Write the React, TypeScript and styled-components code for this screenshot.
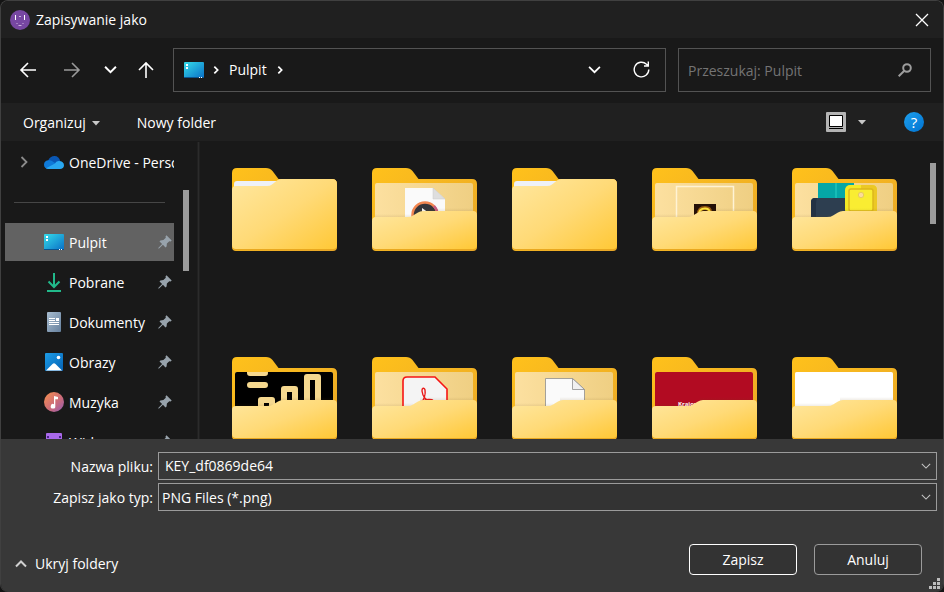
import React, { useId } from 'react';
import styled, { createGlobalStyle } from 'styled-components';

const GlobalStyle = createGlobalStyle`
  * { box-sizing: border-box; }
  body { margin: 0; background: #141414; }
  button, input, select { font: inherit; color: inherit; }
  svg { display: block; flex: none; }
`;

const Dialog = styled.div`
  position: relative;
  display: flex;
  flex-direction: column;
  height: 100vh;
  overflow: hidden;
  border: 1px solid #404040;
  border-width: 1px 1px 0;
  border-radius: 8px;
  background: #191919;
  color: #fff;
  font: 14px/20px 'Open Sans', 'Noto Sans', sans-serif;
`;

const TitleBar = styled.header`
  display: flex;
  align-items: center;
  gap: 6px;
  height: 37px;
  padding: 0 14px 0 9px;
  background: #202020;
`;

const Title = styled.h1`
  flex: 1;
  margin: 0;
  font-size: 14px;
  font-weight: 400;
`;

const IconButton = styled.button`
  display: flex;
  align-items: center;
  justify-content: center;
  padding: 0;
  border: 0;
  background: none;
`;

const NavBar = styled.div`
  display: flex;
  align-items: center;
  gap: 12px;
  height: 65px;
  padding: 0 12px 2px 5px;
`;

const Arrows = styled.div`
  display: grid;
  grid-template-columns: 44px 44px 32px 40px;
  margin-right: -5px;
`;

const Box = styled.div`
  display: flex;
  align-items: center;
  height: 44px;
  border: 1px solid #535353;
`;

const AddressBar = styled(Box)`
  flex: 1;
  gap: 8px;
  padding: 0 15px 0 10px;
`;

const Crumb = styled.a`
  padding: 0 1px;
  color: #fff;
  text-decoration: none;
`;

const AddressTools = styled.div`
  display: flex;
  gap: 32px;
  margin-left: auto;
`;

const SearchBox = styled(Box)`
  width: 253px;
  padding: 0 18px 0 9px;
`;

const SearchInput = styled.input`
  flex: 1;
  min-width: 0;
  padding: 2px 0 0;
  border: 0;
  outline: 0;
  background: none;
  &::placeholder { color: #747474; opacity: 1; }
`;

const Toolbar = styled.div`
  display: flex;
  align-items: center;
  height: 38px;
  padding: 0 19px 0 22px;
  background: #202020;
`;

const MenuButton = styled.button`
  display: flex;
  align-items: center;
  gap: 6px;
  margin-right: 37px;
  padding: 2px 0 0;
  border: 0;
  background: none;
`;

const ToolbarEnd = styled.div`
  display: flex;
  align-items: center;
  gap: 12px;
  margin-left: auto;
`;

const HelpButton = styled.button`
  width: 20px;
  height: 20px;
  margin-left: 26px;
  padding: 0;
  border: 0;
  border-radius: 50%;
  background: linear-gradient(135deg, #1ea0ee, #0072d0);
  font-size: 15px;
  line-height: 20px;
`;

const Body = styled.div`
  display: flex;
  flex: 1;
  min-height: 0;
  padding-right: 7px;
`;

const Sidebar = styled.nav`
  width: 174px;
  overflow: hidden;
  padding-left: 3px;
`;

const Places = styled.ul`
  margin: 0;
  padding: 1px 0 0;
  list-style: none;
`;

const Place = styled.a<{ $selected?: boolean }>`
  display: grid;
  grid-template-columns: 30px 20px 1fr auto;
  align-items: center;
  column-gap: 5px;
  height: 40px;
  padding: 0 2px 0 4px;
  border: 1px solid #191919;
  overflow: hidden;
  color: #fff;
  white-space: nowrap;
  text-decoration: none;
  background: ${p => (p.$selected ? '#626262' : 'none')};
  svg { justify-self: center; }
`;

const PlaceName = styled.span`
  padding-top: 2px;
`;

const Separator = styled.li`
  display: flex;
  align-items: center;
  height: 40px;
  padding: 0 10px;
  &::before { content: ''; flex: 1; height: 1px; background: #464646; }
`;

const Track = styled.div<{ $offset: number }>`
  width: 14px;
  padding: ${p => p.$offset}px 0 0 8px;
`;

const Thumb = styled.div<{ $length: number }>`
  width: 6px;
  height: ${p => p.$length}px;
  background: #9b9b9b;
`;

const Splitter = styled.div`
  width: 3px;
  margin: 1px 0 0 8px;
  border: solid #202020;
  border-width: 0 1px;
  background: #2b2b2b;
`;

const Files = styled.main`
  display: grid;
  flex: 1;
  grid-template-columns: repeat(auto-fill, 106px);
  align-content: start;
  gap: 105px 34px;
  padding: 27px 0 0 32px;
  overflow: hidden;
`;

const FolderButton = styled.button`
  padding: 0;
  border: 0;
  background: none;
`;

const Footer = styled.footer`
  padding: 13px 6px 17px 12px;
  background: #383838;
`;

const Fields = styled.div`
  display: grid;
  grid-template-columns: 140px 1fr;
  align-items: center;
  gap: 3px 5px;
`;

const Label = styled.label`
  padding-top: 2px;
  text-align: right;
`;

const Field = styled.div<{ $dark?: boolean }>`
  display: flex;
  align-items: center;
  height: 28px;
  padding-right: 5px;
  border: 1px solid #9b9b9b;
  background: ${p => (p.$dark ? '#333' : '#383838')};
`;

const NameInput = styled.input`
  flex: 1;
  min-width: 0;
  padding: 0 6px;
  border: 0;
  outline: 0;
  background: none;
`;

const TypeSelect = styled.select`
  flex: 1;
  min-width: 0;
  padding: 2px 3px 0;
  border: 0;
  outline: 0;
  appearance: none;
  background: none;
`;

const Actions = styled.div`
  display: flex;
  align-items: center;
  gap: 17px;
  margin-top: 33px;
  padding-right: 15px;
`;

const FoldersToggle = styled.button`
  display: flex;
  align-items: center;
  gap: 8px;
  margin: 8px auto 0 2px;
  padding: 0;
  border: 0;
  background: none;
`;

const ActionButton = styled.button<{ $primary?: boolean }>`
  width: 108px;
  height: 31px;
  padding: 0;
  border: 1px solid ${p => (p.$primary ? '#fff' : '#9b9b9b')};
  border-radius: 4px;
  background: #333;
`;

const Grip = styled.svg`
  position: absolute;
  right: 3px;
  bottom: 3px;
`;

type ChevronProps = { dir: 'down' | 'up' | 'right'; size?: number; color?: string; width?: number };

function Chevron({ dir, size = 12, color = '#fff', width = 2 }: ChevronProps) {
  const d = { down: 'M1 3.5 6 8.5 11 3.5', up: 'M1 8.5 6 3.5 11 8.5', right: 'M3.5 1 8.5 6 3.5 11' }[dir];
  return (
    <svg width={size} height={size} viewBox="0 0 12 12" fill="none" stroke={color} strokeWidth={width}>
      <path d={d} />
    </svg>
  );
}

function Caret() {
  return <svg width="8" height="5" viewBox="0 0 8 5"><path d="M0 0h8L4 4.5z" fill="#c8c8c8" /></svg>;
}

function Arrow({ dir, color = '#fff' }: { dir: 'left' | 'right' | 'up'; color?: string }) {
  const d = {
    left: 'M17 9H2M9 2 2 9l7 7',
    right: 'M1 9h15M9 2l7 7-7 7',
    up: 'M9 17V2M2 9l7-7 7 7',
  }[dir];
  return (
    <svg width="18" height="18" viewBox="0 0 18 18" fill="none" stroke={color} strokeWidth="1.6">
      <path d={d} />
    </svg>
  );
}

function DesktopIcon() {
  const id = useId();
  return (
    <svg width="20" height="16" viewBox="0 0 20 16">
      <defs>
        <linearGradient id={id} x1="0" y1="0" x2="1" y2="1">
          <stop offset="0" stopColor="#35dcea" /><stop offset="1" stopColor="#0a6fc6" />
        </linearGradient>
      </defs>
      <rect width="20" height="16" rx="1" fill={`url(#${id})`} />
      <path d="M0 15.500h20" stroke="#0b548f" strokeWidth="1" />
      <path d="M2 2h2v2H2zM2 5h2v2H2zM15 15h1v1h-1zM17 15h1v1h-1z" fill="#fff" />
    </svg>
  );
}

function CloudIcon() {
  return (
    <svg width="20" height="13" viewBox="0 0 20 13">
      <path d="M4 5C5 1.500 8 0 10.500 0 13.500 0 15.500 2 16.200 5l-4 4z" fill="#0a57b4" />
      <path d="M4.500 13C1.800 13 0 11 0 8.700 0 6 2 4.300 4.600 4.300c1.500 0 2.600.3 3.700 1l6 3.700z" fill="#0f7ad8" />
      <path d="M2 12.300 11 7.400C12.300 5.500 13.500 4.800 15 4.900c3 0 5 1.800 5 4.300S18.200 13 16 13H5q-2 0-3-.7z" fill="#29a7f0" />
    </svg>
  );
}

function DownloadIcon() {
  return (
    <svg width="14" height="20" viewBox="0 0 14 20" fill="none" stroke="#21b98a" strokeWidth="2">
      <path d="M7 1v14M1.500 9.500 7 15l5.500-5.500M0 19h14" />
    </svg>
  );
}

function DocumentIcon() {
  const id = useId();
  return (
    <svg width="14" height="20" viewBox="0 0 14 20">
      <defs>
        <linearGradient id={id} x1="0" y1="0" x2="1" y2="1">
          <stop offset="0" stopColor="#a9bdd0" /><stop offset="1" stopColor="#65809d" />
        </linearGradient>
      </defs>
      <rect width="14" height="20" rx="1" fill={`url(#${id})`} />
      <path d="M2 6.500h6M2 8.500h6M2 10.500h10M2 12.500h10" stroke="#fff" />
      <path d="M9 6h3v3H9z" fill="#fff" />
    </svg>
  );
}

function PictureIcon() {
  const id = useId();
  return (
    <svg width="18" height="18" viewBox="0 0 18 18">
      <defs>
        <linearGradient id={id} x1="0" y1="0" x2="1" y2="1">
          <stop offset="0" stopColor="#1d9ce6" /><stop offset="1" stopColor="#0562b5" />
        </linearGradient>
      </defs>
      <rect width="18" height="18" rx="1" fill={`url(#${id})`} />
      <path d="M1 17.500 7.500 11q1.500-1.500 3 0L17 17.500z" fill="#fff" />
      <circle cx="13.500" cy="4.500" r="1.800" fill="#fff" />
    </svg>
  );
}

function MusicIcon() {
  const id = useId();
  return (
    <svg width="20" height="20" viewBox="0 0 20 20">
      <defs>
        <linearGradient id={id} x1="0" y1="0" x2="1" y2="1">
          <stop offset="0.100" stopColor="#f08a55" /><stop offset="0.600" stopColor="#c96a7c" /><stop offset="1" stopColor="#8f5bb8" />
        </linearGradient>
      </defs>
      <circle cx="10" cy="10" r="10" fill={`url(#${id})`} />
      <path d="M10 4v8.200A2.300 2.300 0 1 0 11.300 14V7.300H14V5z" fill="#fff" />
    </svg>
  );
}

function VideoIcon() {
  return (
    <svg width="16" height="18" viewBox="0 0 16 18">
      <rect width="16" height="18" rx="1" fill="#a969ea" />
      <path d="M1 3h2v2H1zM13 3h2v2h-2zM1 9h2v2H1zM13 9h2v2h-2z" fill="#4a2488" />
      <path d="M5 6l7 4-7 4z" fill="#fff" />
    </svg>
  );
}

function PinIcon() {
  return (
    <svg width="14" height="14" viewBox="0 0 14 14">
      <path d="M8.500.3 13.700 5.500 12.600 6.500 11.300 6.200 8.900 8.600 8.600 11.600 7.500 12.400 4.900 9.800 1 13.400.2 13.600.5 12.800 4.100 9 1.500 6.500 2.400 5.400 5.400 5.100 7.800 2.700 7.500 1.400z" fill="#98a3ac" />
    </svg>
  );
}

type FolderArt = 'empty' | 'media' | 'game' | 'blocks' | 'chart' | 'pdf' | 'page' | 'red' | 'white';

function FolderContent({ art }: { art: FolderArt }) {
  switch (art) {
    case 'media':
      return (
        <g>
          <path d="M33 20h28l12 11v22H33z" fill="#fafafa" />
          <path d="M61 20v11h12z" fill="#dedede" stroke="#c8c8c8" strokeWidth=".5" />
          <circle cx="53" cy="47" r="12.500" fill="#35353a" stroke="#f28650" strokeWidth="2.500" />
          <path d="M62 38a12.500 12.500 0 0 1 3.500 8" fill="none" stroke="#c65c82" strokeWidth="2.500" />
          <path d="M50 40l7 5-7 4z" fill="#fff" />
        </g>
      );
    case 'game':
      return (
        <g>
          <path d="M24.500 54V18.500h57V54" fill="none" stroke="#fff3d4" strokeWidth="1.500" />
          <path d="M42 36h22v16H42z" fill="#251006" />
          <path d="M47 46q0-6 6-6 5 0 5 4" fill="none" stroke="#9b5a10" strokeWidth="4" />
          <path d="M47 46q0-5.500 6-5.500 4 0 5 3.500" fill="none" stroke="#ffe63c" strokeWidth="2" />
        </g>
      );
    case 'blocks':
      return (
        <g>
          <path d="M26 15h36v20H26z" fill="#05a7a7" />
          <path d="M44 15v18" stroke="#16bcb6" strokeWidth="2" />
          <path d="M19 54V34q0-4 4-4h36v24z" fill="#2d3e50" />
          <path d="M19 54V34q0-4 4-4h2q-1 3-1 6v18z" fill="#233244" />
          <rect x="53" y="17" width="32" height="30" rx="5" fill="#f5ea24" />
          <path d="M69 17h11q5 0 5 5v25H69z" fill="#ecc824" />
          <rect x="57" y="21" width="24" height="22" rx="2" fill="#f9ed32" stroke="#ddb71c" strokeWidth="1.500" />
          <circle cx="69" cy="27" r="2.700" fill="#fbdc9a" stroke="#e6cc5e" />
        </g>
      );
    case 'chart':
      return (
        <g>
          <path d="M3 15h98v40H3z" fill="#000" />
          <path d="M18 16h15M18 28h15" stroke="#f5d88f" strokeWidth="6" strokeLinecap="round" />
          <path d="M29 54V43h11v11M52 54V32h11v22M75 54V20h11v34" fill="none" stroke="#f5d88f" strokeWidth="6" strokeLinejoin="round" />
        </g>
      );
    case 'pdf':
      return (
        <g>
          <path d="M31 54V24q0-4 4-4h28l12 12v22z" fill="#f4f4f4" stroke="#f51414" strokeWidth="1.600" />
          <path d="M48 48c3-4 6-10 5-15-.7-3-3.300-2-3 1 .5 5 4 10 9 11 4 0 3-3-3-2.500-5 .5-9 3.500-11 6" fill="none" stroke="#ea1919" strokeWidth="1.400" />
        </g>
      );
    case 'page':
      return (
        <g stroke="#8e8e8e" strokeWidth=".8">
          <path d="M33.500 21.500h27l12 11V54h-39z" fill="#fafafa" />
          <path d="M60.500 21.500v11h12z" fill="#f0f0f0" />
        </g>
      );
    case 'red':
      return (
        <g>
          <path d="M3 15h98v40H3z" fill="#b20b22" />
          <text x="26" y="49" fontFamily="Open Sans, sans-serif" fontSize="6" fontWeight="700" fill="#fff">Krajowa</text>
        </g>
      );
    case 'white':
      return <path d="M3 15h98v40H3z" fill="#fff" />;
    default:
      return null;
  }
}

function Folder({ art }: { art: FolderArt }) {
  const id = useId();
  const closed = art === 'empty';
  const flap = closed
    ? 'M0 23q0-4 4-4h31q3 0 5-1.500l5-4q1.500-1.500 4-1.500h51q5 0 5 5v61q0 4-4 4H4q-4 0-4-4z'
    : 'M0 54q0-4 4-4h31q4 0 6-1.500l5-3q2-1.500 5-1.500h50q4 0 4 4v30q0 4-4 4H4q-4 0-4-4z';
  return (
    <svg width="106" height="84" viewBox="0 0 106 84">
      <defs>
        <linearGradient id={`${id}b`} x1="0" y1="0" x2="1" y2="1">
          <stop offset="0" stopColor="#ffc11b" /><stop offset="1" stopColor="#e8a628" />
        </linearGradient>
        <linearGradient id={`${id}f`} x1="0" y1="0" x2="1" y2="1">
          <stop offset="0" stopColor="#ffe79f" /><stop offset="0.500" stopColor="#ffda77" /><stop offset="1" stopColor="#ffc836" />
        </linearGradient>
        <linearGradient id={`${id}p`} x1="0" y1="0" x2="1" y2="0">
          <stop offset="0" stopColor="#fce0a0" /><stop offset="1" stopColor="#efcf83" />
        </linearGradient>
        <linearGradient id={`${id}s`} x1="0" y1="0" x2="0" y2="1">
          <stop offset="0" stopColor="#6b4a10" stopOpacity="0" /><stop offset="1" stopColor="#6b4a10" stopOpacity="0.200" />
        </linearGradient>
        <clipPath id={`${id}c`}><rect x="3" y="15" width="98" height="45" rx="2" /></clipPath>
      </defs>
      <path d="M0 5q0-5 5-5h29q4 0 6.500 3l6 8H100q5 0 5 5v63q0 4-4 4H4q-4 0-4-4z" fill={`url(#${id}b)`} />
      {closed ? (
        <path d="M2 21v-5q0-3 3-3h43l-6 6z" fill="#eef1f7" />
      ) : (
        <g clipPath={`url(#${id}c)`}>
          <path d="M3 15h98v45H3z" fill={`url(#${id}p)`} />
          <FolderContent art={art} />
          <path d="M3 46h38v6H3z" fill={`url(#${id}s)`} />
          <path d="M48 40h53v6H48z" fill={`url(#${id}s)`} />
        </g>
      )}
      <path d={flap} fill="#e9a820" />
      <path d={flap} fill={`url(#${id}f)`} transform="translate(0 -1)" />
    </svg>
  );
}

const places = [
  { name: 'Pulpit', icon: <DesktopIcon />, selected: true },
  { name: 'Pobrane', icon: <DownloadIcon /> },
  { name: 'Dokumenty', icon: <DocumentIcon /> },
  { name: 'Obrazy', icon: <PictureIcon /> },
  { name: 'Muzyka', icon: <MusicIcon /> },
  { name: 'Wideo', icon: <VideoIcon /> },
];

const folders: FolderArt[] = ['empty', 'media', 'empty', 'game', 'blocks', 'chart', 'pdf', 'page', 'red', 'white'];

export default function App() {
  return (
    <>
      <GlobalStyle />
      <Dialog role="dialog" aria-labelledby="dialog-title">
        <TitleBar>
          <svg width="20" height="20" viewBox="0 0 20 20">
            <circle cx="10" cy="10" r="10" fill="#7747a2" />
            <path d="M5.500 5v5M14.500 5v5" stroke="#fff" />
            <path d="M9 6.500h2M6.500 13l1 1M8.500 15.500h3M13.500 13l-1 1" stroke="#cdb5e0" />
          </svg>
          <Title id="dialog-title">Zapisywanie jako</Title>
          <IconButton aria-label="Zamknij">
            <svg width="14" height="14" viewBox="0 0 14 14" stroke="#fff" strokeWidth="1.300"><path d="M1 1l12 12M13 1 1 13" /></svg>
          </IconButton>
        </TitleBar>
        <NavBar>
          <Arrows>
            <IconButton aria-label="Wstecz"><Arrow dir="left" /></IconButton>
            <IconButton aria-label="Dalej"><Arrow dir="right" color="#9a9a9a" /></IconButton>
            <IconButton aria-label="Ostatnie lokalizacje"><Chevron dir="down" size={13} width={1.800} /></IconButton>
            <IconButton aria-label="W górę"><Arrow dir="up" /></IconButton>
          </Arrows>
          <AddressBar>
            <DesktopIcon />
            <Chevron dir="right" size={8} width={2.600} />
            <Crumb href="#pulpit">Pulpit</Crumb>
            <Chevron dir="right" size={8} width={2.600} />
            <AddressTools>
              <IconButton aria-label="Poprzednie lokalizacje"><Chevron dir="down" size={13} width={1.600} /></IconButton>
              <IconButton aria-label="Odśwież">
                <svg width="17" height="17" viewBox="0 0 17 17" fill="none" stroke="#fff" strokeWidth="1.400">
                  <path d="M15.800 8.500A7.300 7.300 0 1 1 13.500 3.200L15.300 4.900M15.300.5V5H11" />
                </svg>
              </IconButton>
            </AddressTools>
          </AddressBar>
          <SearchBox>
            <SearchInput aria-label="Przeszukaj" placeholder="Przeszukaj: Pulpit" />
            <IconButton aria-label="Szukaj">
              <svg width="14" height="14" viewBox="0 0 14 14" fill="none" stroke="#9d9d9d" strokeWidth="2">
                <circle cx="9" cy="5" r="3.800" /><path d="M6.300 7.700.7 13.300" />
              </svg>
            </IconButton>
          </SearchBox>
        </NavBar>
        <Toolbar>
          <MenuButton>Organizuj <Caret /></MenuButton>
          <MenuButton>Nowy folder</MenuButton>
          <ToolbarEnd>
            <IconButton aria-label="Zmień widok">
              <svg width="20" height="20" viewBox="0 0 20 20">
                <rect width="20" height="20" rx="1" fill="#b4b4b4" />
                <path d="M3.500 3.500h13v11h-13z" fill="#fff" stroke="#000" />
                <path d="M3 16.500h14" stroke="#000" />
              </svg>
            </IconButton>
            <IconButton aria-label="Więcej opcji"><Caret /></IconButton>
            <HelpButton aria-label="Pomoc">?</HelpButton>
          </ToolbarEnd>
        </Toolbar>
        <Body>
          <Sidebar>
            <Places>
              <li>
                <Place href="#onedrive">
                  <Chevron dir="right" color="#8a8a8a" width={1.800} />
                  <CloudIcon />
                  <PlaceName>OneDrive - Personal</PlaceName>
                </Place>
              </li>
              <Separator />
              {places.map(p => (
                <li key={p.name}>
                  <Place href={`#${p.name}`} $selected={p.selected}>
                    <span />
                    {p.icon}
                    <PlaceName>{p.name}</PlaceName>
                    <PinIcon />
                  </Place>
                </li>
              ))}
            </Places>
          </Sidebar>
          <Track $offset={49}><Thumb $length={81} /></Track>
          <Splitter />
          <Files>
            {folders.map((art, i) => (
              <FolderButton key={i} aria-label={`Folder ${i + 1}`}><Folder art={art} /></FolderButton>
            ))}
          </Files>
          <Track $offset={22}><Thumb $length={61} /></Track>
        </Body>
        <Footer>
          <Fields>
            <Label htmlFor="file-name">Nazwa pliku:</Label>
            <Field>
              <NameInput id="file-name" defaultValue="KEY_df0869de64" />
              <IconButton aria-label="Poprzednie nazwy"><Chevron dir="down" size={10} color="#c4c4c4" width={1.300} /></IconButton>
            </Field>
            <Label htmlFor="file-type">Zapisz jako typ:</Label>
            <Field $dark>
              <TypeSelect id="file-type"><option>PNG Files (*.png)</option></TypeSelect>
              <Chevron dir="down" size={10} color="#c4c4c4" width={1.300} />
            </Field>
          </Fields>
          <Actions>
            <FoldersToggle><Chevron dir="up" color="#d0d0d0" />Ukryj foldery</FoldersToggle>
            <ActionButton $primary>Zapisz</ActionButton>
            <ActionButton>Anuluj</ActionButton>
          </Actions>
        </Footer>
        <Grip width="11" height="11" viewBox="0 0 11 11">
          <path d="M8 0h3v3H8zM4 4h3v3H4zM8 4h3v3H8zM0 8h3v3H0zM4 8h3v3H4zM8 8h3v3H8z" fill="#bdbdbd" />
        </Grip>
      </Dialog>
    </>
  );
}
